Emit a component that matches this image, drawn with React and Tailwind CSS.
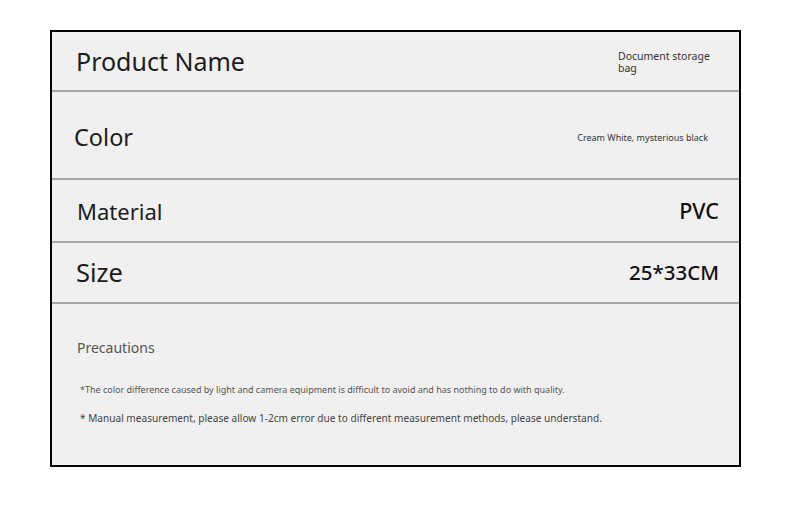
const Divider = () => <div className="h-[2px] bg-[#a6a6a6]" />;

const App = () => {
  return (
    <div className="w-[790px] h-[524px] bg-white pt-[30px] pl-[50px]" style={{ fontFamily: '"Noto Sans", "Open Sans", sans-serif' }}>
      <div className="w-[691px] h-[437px] border-2 border-black bg-[#f0f0f0] flex flex-col">
        {/* product name */}
        <div className="flex items-center justify-between h-[58px] pl-6 pr-[20px]">
          <span className="text-[25px] text-[#1c1c1c] leading-none">Product Name</span>
          <div className="w-[101px] text-[10.5px] leading-[12.5px] text-[#333] mt-[2px]">
            <div>Document storage</div>
            <div>bag</div>
          </div>
        </div>
        <Divider />
        <div className="flex items-center justify-between h-[86px] pl-[22px] pr-[31px]">
          <span className="text-[23.5px] text-[#1c1c1c] leading-none mt-[5px]">Color</span>
          <span className="text-[9px] text-[#333] leading-none mt-[5px]">Cream White, mysterious black</span>
        </div>
        <Divider />
        <div className="flex items-center justify-between h-[61px] pl-[25px] pr-[20px]">
          <span className="text-[22px] text-[#1c1c1c] leading-none">Material</span>
          <span className="text-[21.5px] font-medium text-[#111] leading-none">PVC</span>
        </div>
        <Divider />
        <div className="flex items-center justify-between h-[59px] pl-6 pr-[20px]">
          <span className="text-[25.5px] text-[#1c1c1c] leading-none">Size</span>
          <span className="text-[20.5px] font-medium text-[#111] leading-none">25*33CM</span>
        </div>
        <Divider />
        {/* notes */}
        <div className="flex-1 pl-[25px] pt-[37px]">
          <div className="text-[14px] text-[#555] leading-none">Precautions</div>
          <div className="mt-[30px] pl-[3px] text-[9px] text-[#555] leading-none">
            *The color difference caused by light and camera equipment is difficult to avoid and has nothing to do with quality.
          </div>
          <div className="mt-[19px] pl-[3px] text-[10.1px] text-[#444] leading-none">
            * Manual measurement, please allow 1-2cm error due to different measurement methods, please understand.
          </div>
        </div>
      </div>
    </div>
  );
};

export default App;
